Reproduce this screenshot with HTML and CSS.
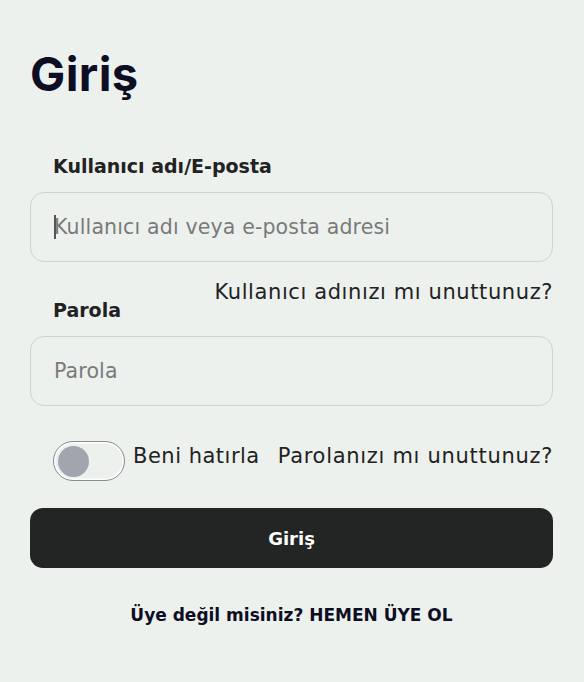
FILE: index.html
```html
<!DOCTYPE html>
<html lang="tr">
<head>
<meta charset="utf-8">
<link rel="stylesheet" href="styles.css">
</head>
<body>
<main class="page">
  <h1 class="title">Giriş</h1>
  <form class="form">
    <label class="label" for="user">Kullanıcı adı/E-posta</label>
    <div class="field"><span class="caret"></span><input id="user" class="input" placeholder="Kullanıcı adı veya e-posta adresi"></div>
    <div class="between">
      <label class="label label-pw" for="pw">Parola</label>
      <a class="link forgot-user">Kullanıcı adınızı mı unuttunuz?</a>
    </div>
    <div class="field"><input id="pw" class="input" type="password" placeholder="Parola"></div>
    <div class="options">
      <label class="remember">
        <span class="toggle"><span class="knob"></span></span>
        <span class="remember-text">Beni hatırla</span>
      </label>
      <a class="link link-raised">Parolanızı mı unuttunuz?</a>
    </div>
    <button type="button" class="submit">Giriş</button>
    <p class="signup">Üye değil misiniz? HEMEN ÜYE OL</p>
  </form>
</main>
</body>
</html>
```
FILE: styles.css
```css
* { box-sizing: border-box; }
html, body { margin: 0; padding: 0; background: #ecf1ee; }
body { font-family: "DejaVu Sans", "Inter", sans-serif; color: #222; }
.page { padding: 44px 31px 0 30px; }
.title { margin: 0; font-family: "Inter", sans-serif; font-size: 47px; font-weight: 700; color: #0d0e24; line-height: 60px; letter-spacing: 0.4px; }
.form { display: flex; flex-direction: column; margin-top: 50px; }
.label { font-size: 19px; font-weight: 700; color: #222; margin-left: 23px; line-height: 24px; }
.field { position: relative; margin-top: 14px; }
.input { width: 100%; height: 70px; border: 1px solid #cfd4d2; border-radius: 14px; background: #ecf1ee; padding: 0 23px; font-family: inherit; font-size: 20.5px; letter-spacing: 0.15px; color: #222; outline: none; }
.input::placeholder { color: #7a7a7a; }
.caret { position: absolute; left: 24px; top: 23px; width: 1.5px; height: 24px; background: #555; }
.between { display: flex; justify-content: space-between; align-items: flex-start; margin-top: 18px; }
.label-pw { margin-top: 18px; }
.link { font-size: 21px; color: #222; line-height: 24px; letter-spacing: 0.6px; }
.options { display: flex; align-items: center; justify-content: space-between; margin-top: 35px; padding-left: 23px; }
.remember { display: flex; align-items: center; gap: 8px; }
.toggle { width: 72px; height: 40px; border-radius: 20px; border: 1.5px solid #888c90; box-shadow: inset 0 0 0 1.5px #fff; display: flex; align-items: center; padding-left: 4px; }
.knob { width: 31px; height: 31px; border-radius: 50%; background: #a1a5ad; }
.remember-text { font-size: 21px; color: #222; letter-spacing: 0.5px; margin-bottom: 10px; }
.link-raised { margin-bottom: 10px; letter-spacing: 0.7px; }
.submit { margin-top: 27px; height: 60px; border: none; border-radius: 13px; background: #232524; color: #fff; font-family: inherit; font-size: 18px; font-weight: 700; }
.signup { margin: 37px 0 0; text-align: center; font-size: 17px; font-weight: 700; color: #0d0e24; }
```
